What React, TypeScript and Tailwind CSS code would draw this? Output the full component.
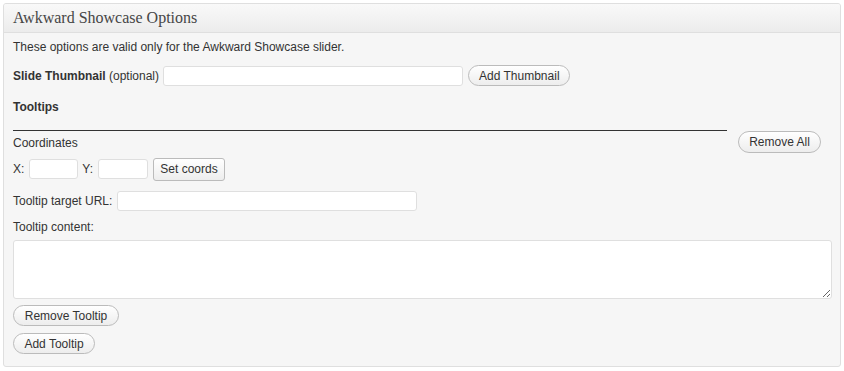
import React from 'react';

const pill =
	'h-[21px] px-[10px] rounded-full border border-[#bbbbbb] bg-gradient-to-b from-white to-[#ededed] text-[12px] leading-none text-[#333] whitespace-nowrap';
const field = 'h-[20px] bg-white border border-[#dfdfdf] rounded-[3px]';

export default function App() {
	return (
		<div
			className="w-[844px] h-[371px] bg-white pt-[3px] pl-[3px]"
			style={{ fontFamily: '"Liberation Sans", Arial, sans-serif' }}>
			<div className="w-[838px] h-[364px] border border-[#dfdfdf] rounded-[3px] bg-[#f6f6f6] overflow-hidden">
				<div className="h-[29px] border-b border-[#dfdfdf] bg-gradient-to-b from-[#f9f9f9] to-[#ececec] flex items-center px-[9px]">
					<h3
						className="text-[16px] leading-none text-[#464646] -mt-[1px]"
						style={{ fontFamily: '"Liberation Serif", Georgia, serif' }}>
						Awkward Showcase Options
					</h3>
				</div>
				<div className="px-[9px] pt-[5px] text-[12px] text-[#333] leading-[18px]">
					<p>These options are valid only for the Awkward Showcase slider.</p>
					<div className="flex items-center mt-[9px] h-[21px]">
						<span>
							<b>Slide Thumbnail</b> (optional)
						</span>
						<input className={`${field} w-[300px] ml-[4px]`} />
						<button className={`${pill} ml-[5px] w-[102px]`}>Add Thumbnail</button>
					</div>
					<p className="font-bold mt-[12px]">Tooltips</p>
					<div className="flex items-start mt-[14px]">
						<div className="w-[714px]">
							<div className="h-[1px] bg-[#333]" />
							<p className="mt-[3px]">Coordinates</p>
							<div className="flex items-center mt-[6px] h-[22px]">
								<span>X:</span>
								<input className={`${field} w-[49px] ml-[5px]`} />
								<span className="ml-[4px]">Y:</span>
								<input className={`${field} w-[50px] ml-[5px]`} />
								<button className="h-[23px] w-[72px] ml-[5px] rounded-[3px] border border-[#bbbbbb] bg-gradient-to-b from-white to-[#ededed] text-[12px] text-[#333]">
									Set coords
								</button>
							</div>
						</div>
						<button className={`${pill} ml-[11px] mt-[1px] h-[22px] w-[83px]`}>Remove All</button>
					</div>
					<div className="flex items-center mt-[11px]">
						<span>Tooltip target URL:</span>
						<input className={`${field} w-[300px] ml-[5px]`} />
					</div>
					<p className="mt-[7px]">Tooltip content:</p>
					<textarea className="block w-[819px] h-[59px] mt-[4px] bg-white border border-[#dfdfdf] rounded-[3px]" />
					<button className={`${pill} block mt-[6px] w-[106px]`}>Remove Tooltip</button>
					<button className={`${pill} block mt-[7px] w-[82px]`}>Add Tooltip</button>
				</div>
			</div>
		</div>
	);
}
